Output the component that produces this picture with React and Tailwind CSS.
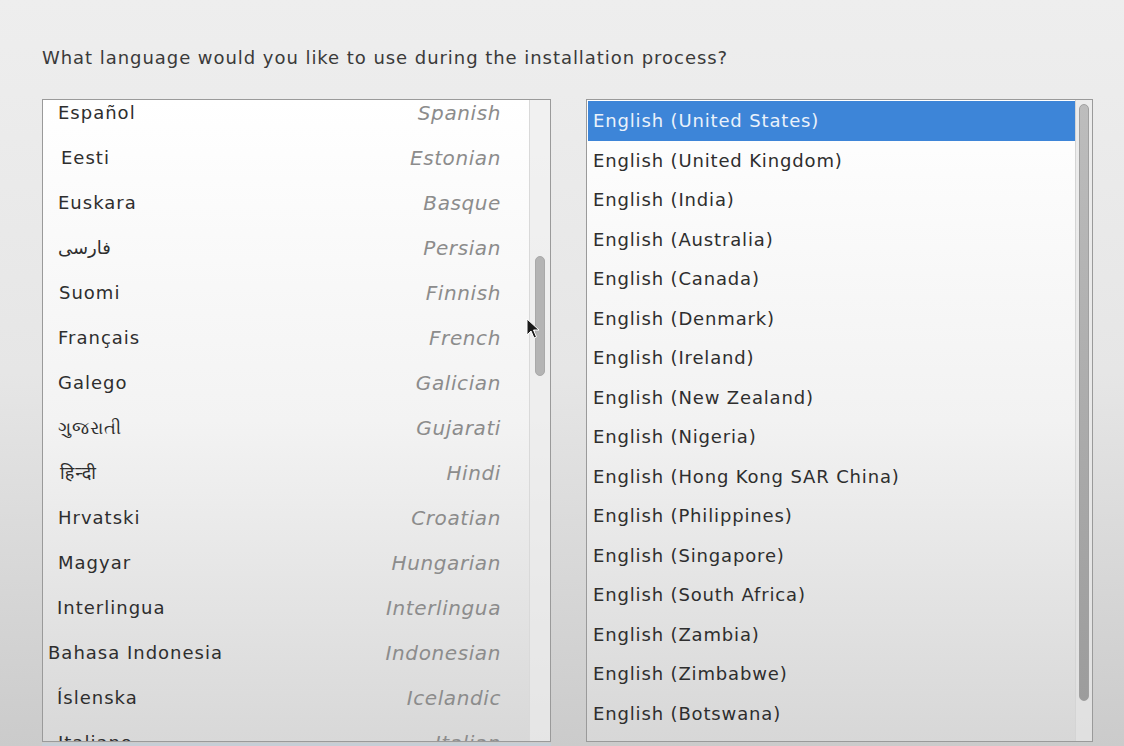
import React from "react";

const langs = [
  { n: "Español", e: "Spanish", p: "pl-[15px]" },
  { n: "Eesti", e: "Estonian", p: "pl-[18px]" },
  { n: "Euskara", e: "Basque", p: "pl-[15px]" },
  { n: "فارسی", e: "Persian", p: "pl-[15px]" },
  { n: "Suomi", e: "Finnish", p: "pl-[16px]" },
  { n: "Français", e: "French", p: "pl-[15px]" },
  { n: "Galego", e: "Galician", p: "pl-[15px]" },
  { n: "ગુજરાતી", e: "Gujarati", p: "pl-[15px]" },
  { n: "हिन्दी", e: "Hindi", p: "pl-[17px]" },
  { n: "Hrvatski", e: "Croatian", p: "pl-[15px]" },
  { n: "Magyar", e: "Hungarian", p: "pl-[15px]" },
  { n: "Interlingua", e: "Interlingua", p: "pl-[14px]" },
  { n: "Bahasa Indonesia", e: "Indonesian", p: "pl-[5px]" },
  { n: "Íslenska", e: "Icelandic", p: "pl-[14px]" },
  { n: "Italiano", e: "Italian", p: "pl-[15px]" },
];

const locales = [
  "English (United States)",
  "English (United Kingdom)",
  "English (India)",
  "English (Australia)",
  "English (Canada)",
  "English (Denmark)",
  "English (Ireland)",
  "English (New Zealand)",
  "English (Nigeria)",
  "English (Hong Kong SAR China)",
  "English (Philippines)",
  "English (Singapore)",
  "English (South Africa)",
  "English (Zambia)",
  "English (Zimbabwe)",
  "English (Botswana)",
];

export default function App() {
  return (
    <div
      className="relative flex flex-col w-[1124px] h-[746px] overflow-hidden bg-gradient-to-b from-[#eeeeee] via-[#e6e6e6] to-[#cbcbcb] text-[#2e2e2e]"
      style={{ fontFamily: '"DejaVu Sans", "Open Sans", "Noto Sans", sans-serif' }}
    >
      <h1 className="mt-[-20px] ml-[45px] h-[24px] text-[24px] leading-[24px] font-bold tracking-[5px] text-[#888888] uppercase">
        Welcome to CentOS 7.
      </h1>
      <p className="ml-[42px] mt-[42px] text-[18px] leading-[24px] tracking-[0.95px] text-[#3a3a3a]">
        What language would you like to use during the installation process?
      </p>
      <div className="flex gap-[35px] ml-[42px] mt-[29px]">
        {/* left list */}
        <div className="flex w-[509px] h-[643px] border border-[#9a9a9a] bg-gradient-to-b from-[#ffffff] via-[#f3f3f3] to-[#d8d8d8] overflow-hidden">
          <div className="flex-1 overflow-hidden">
            <div className="mt-[-10px]">
              {langs.map((l) => (
                <div key={l.e} className={`flex items-center justify-between h-[45px] ${l.p} pr-[28px]`}>
                  <span className="text-[18px] tracking-[1px] text-[#2e2e2e]">{l.n}</span>
                  <span className="text-[20px] tracking-[0.6px] italic text-[#8c8c8c]">{l.e}</span>
                </div>
              ))}
            </div>
          </div>
          <div className="w-[21px] border-l border-[#d9d9d9] bg-[#ebebeb]/70 pt-[156px] flex justify-center">
            <div className="w-[10px] h-[120px] rounded-full bg-[#b4b4b4] border border-[#a9a9a9]" />
          </div>
        </div>
        {/* right list */}
        <div className="flex w-[507px] h-[643px] border border-[#9a9a9a] bg-gradient-to-b from-[#ffffff] via-[#f2f2f2] to-[#d7d7d7] overflow-hidden">
          <div className="flex-1 pl-[1px] pt-[1px]">
            {locales.map((t, i) => (
              <div
                key={t}
                className={`flex items-center h-[39.5px] pl-[5px] text-[18px] tracking-[0.85px] ${
                  i === 0 ? "bg-[#3d85d8] text-[#eaf2fb]" : "text-[#2e2e2e]"
                }`}
              >
                {t}
              </div>
            ))}
          </div>
          <div className="w-[17px] border-l border-[#d4d4d4] bg-[#e4e4e4]/70 pt-[4px] flex justify-center">
            <div className="w-[10px] h-[597px] rounded-full bg-gradient-to-b from-[#bdbdbd] to-[#9c9c9c] border border-[#a0a0a0]" />
          </div>
        </div>
      </div>
      <div className="ml-[42px] mt-[1px] w-[509px] h-[4px] bg-[#c6ced6]" />
      {/* mouse pointer */}
      <svg className="absolute left-[526px] top-[318px]" width="14" height="22" viewBox="0 0 14 22">
        <path d="M1 1 L1 17 L5 13 L8 20 L10.5 19 L7.5 12 L13 12 Z" fill="#1a1a1a" stroke="#ffffff" strokeWidth="1" />
      </svg>
    </div>
  );
}
